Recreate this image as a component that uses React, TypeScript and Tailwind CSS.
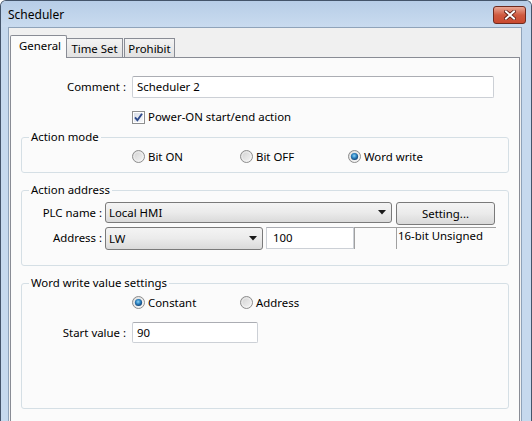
import React from "react";

function Radio({ checked }: { checked?: boolean }) {
  return (
    <svg width="13" height="13" viewBox="0 0 13 13" className="shrink-0">
      <defs>
        <linearGradient id="rg-off" x1="0" y1="0" x2="1" y2="1">
          <stop offset="0" stopColor="#cfcfcf" />
          <stop offset="1" stopColor="#f7f7f7" />
        </linearGradient>
        <radialGradient id="rg-on" cx="0.45" cy="0.4" r="0.6">
          <stop offset="0" stopColor="#8fd3f5" />
          <stop offset="0.5" stopColor="#2f86c4" />
          <stop offset="1" stopColor="#0f3f73" />
        </radialGradient>
      </defs>
      <circle cx="6.5" cy="6.5" r="6" fill="url(#rg-off)" stroke="#8d8d8d" strokeWidth="1" />
      <circle cx="6.5" cy="6.5" r="4.6" fill="none" stroke="#ffffff" strokeOpacity="0.6" strokeWidth="0.8" />
      {checked && <circle cx="6.5" cy="6.5" r="3.6" fill="url(#rg-on)" />}
    </svg>
  );
}

function Checkbox() {
  return (
    <svg width="13" height="13" viewBox="0 0 13 13" className="shrink-0">
      <defs>
        <linearGradient id="cb-fill" x1="0" y1="0" x2="1" y2="1">
          <stop offset="0" stopColor="#dadfe8" />
          <stop offset="1" stopColor="#f6f7f9" />
        </linearGradient>
      </defs>
      <rect x="0.5" y="0.5" width="12" height="12" fill="#ffffff" stroke="#8e8f8f" />
      <rect x="2" y="2" width="9" height="9" fill="url(#cb-fill)" />
      <path d="M3 6.4 L5.4 9.2 L10 2.8" fill="none" stroke="#2e4a8c" strokeWidth="1.9" />
    </svg>
  );
}

function Arrow() {
  return (
    <svg width="8" height="5" viewBox="0 0 8 5" className="shrink-0">
      <path d="M0 0 H8 L4 4.5 Z" fill="#1a1a1a" />
    </svg>
  );
}

function RadioItem({ label, checked }: { label: string; checked?: boolean }) {
  return (
    <div className="w-[108px] flex items-center gap-[3px]">
      <Radio checked={checked} />
      <span>{label}</span>
    </div>
  );
}

function Group({ title, children, className }: { title: string; children: React.ReactNode; className?: string }) {
  return (
    <fieldset className={"ml-[10px] w-[488px] border border-[#d5dfe5] rounded-[3px] " + (className ?? "")}>
      <legend className="ml-[7px] px-[2px] h-[18px] leading-[18px]">{title}</legend>
      {children}
    </fieldset>
  );
}

export default function App() {
  return (
    <div className="w-[532px] h-[421px] overflow-hidden flex flex-col bg-[#c6d9ee] border-x border-t border-[#44546a] rounded-t-[6px] font-['Noto_Sans',sans-serif] text-[11.4px] text-black">
      <div className="h-[26px] shrink-0 flex items-start justify-between pl-[7px] pr-[5px] bg-linear-to-b from-[#b7cde7] to-[#c9dbef]">
        <span className="leading-[28px] text-[12px]">Scheduler</span>
        <div className="mt-[5px] w-[33px] h-[18px] rounded-[3px] border border-[#6e2a1f] bg-linear-to-b from-[#e9a897] via-[#cf5a40] to-[#c9492f] flex items-center justify-center">
          <svg width="12" height="10" viewBox="0 0 12 10">
            <path d="M2 1.5 L10 8.5 M10 1.5 L2 8.5" stroke="#5b1c12" strokeWidth="3.6" strokeLinecap="square" />
            <path d="M2 1.5 L10 8.5 M10 1.5 L2 8.5" stroke="#ffffff" strokeWidth="2" strokeLinecap="square" />
          </svg>
        </div>
      </div>
      <div className="flex-1 flex flex-col ml-[7px] mr-[9px] border-x border-t border-[#8fa3ba] bg-[#f0f0f0] px-px pt-[7px]">
        <div className="flex items-end">
          <div className="relative z-10 w-[57px] h-[23px] -mb-px border-x border-t border-[#898c95] bg-[#fbfbfb] pl-[8px] leading-[20px] rounded-t-[2px]">
            General
          </div>
          <div className="w-[56px] h-[19px] border-r border-t border-[#898c95] bg-linear-to-b from-[#f3f3f3] to-[#e2e2e2] flex justify-center leading-[19px]">
            Time Set
          </div>
          <div className="ml-px w-[51px] h-[19px] border-x border-t border-[#898c95] bg-linear-to-b from-[#f3f3f3] to-[#e2e2e2] flex justify-center leading-[19px]">
            Prohibit
          </div>
        </div>
        <div className="flex-1 flex flex-col border-x border-t border-[#898c95] bg-[#fbfbfb] pt-[18px]">
          <div className="flex items-center">
            <span className="w-[115px] text-right">Comment :</span>
            <div className="ml-[6px] w-[362px] h-[22px] border border-[#ccd0d6] border-t-[#abadb3] rounded-[2px] bg-white pl-[4px] flex items-center">
              Scheduler 2
            </div>
          </div>
          <div className="mt-[11px] h-[16px] pl-[121px] flex items-center gap-[3px]">
            <Checkbox />
            <span>Power-ON start/end action</span>
          </div>
          <Group title="Action mode" className="mt-[3px]">
            <div className="mt-[2px] mb-[6px] h-[18px] pl-[110px] flex items-center">
              <RadioItem label="Bit ON" />
              <RadioItem label="Bit OFF" />
              <RadioItem label="Word write" checked />
            </div>
          </Group>
          <Group title="Action address" className="mt-[8px]">
            <div className="mt-[3px] flex items-start">
              <span className="w-[80px] text-right leading-[21px]">PLC name :</span>
              <div className="ml-[3px] w-[287px] h-[21px] border border-[#7a7a7a] rounded-[3px] bg-linear-to-b from-[#f4f4f4] via-[#ebebeb] to-[#dadada] flex items-center justify-between pl-[3px] pr-[5px]">
                <span>Local HMI</span>
                <Arrow />
              </div>
              <div className="ml-[4px] w-[99px] h-[23px] border border-[#7a7a7a] rounded-[3px] bg-linear-to-b from-[#f4f4f4] via-[#ebebeb] to-[#d9d9d9] flex items-center justify-center">
                Setting...
              </div>
            </div>
            <div className="mt-[2px] mb-[15px] flex items-start">
              <span className="w-[80px] text-right leading-[22px]">Address :</span>
              <div className="ml-[3px] w-[158px] h-[23px] border border-[#7a7a7a] rounded-[3px] bg-linear-to-b from-[#f4f4f4] via-[#ebebeb] to-[#dadada] flex items-center justify-between pl-[3px] pr-[5px]">
                <span>LW</span>
                <Arrow />
              </div>
              <div className="ml-[3px] w-[88px] h-[22px] border border-[#ccd0d6] border-t-[#abadb3] bg-white pl-[6px] flex items-center">
                100
              </div>
              <div className="w-[42px] h-[22px] border-l border-t border-[#a0a0a0]" />
              <div className="w-[100px] h-[22px] border-l border-t border-[#a0a0a0] pl-px leading-[16px]">
                16-bit Unsigned
              </div>
            </div>
          </Group>
          <Group title="Word write value settings" className="mt-[8px]">
            <div className="mt-[2px] h-[18px] pl-[110px] flex items-center">
              <RadioItem label="Constant" checked />
              <RadioItem label="Address" />
            </div>
            <div className="mt-[10px] mb-[65px] flex items-center">
              <span className="w-[104px] text-right">Start value :</span>
              <div className="ml-[6px] w-[126px] h-[21px] border border-[#ccd0d6] border-t-[#abadb3] rounded-[2px] bg-white pl-[4px] flex items-center">
                90
              </div>
            </div>
          </Group>
        </div>
      </div>
    </div>
  );
}
